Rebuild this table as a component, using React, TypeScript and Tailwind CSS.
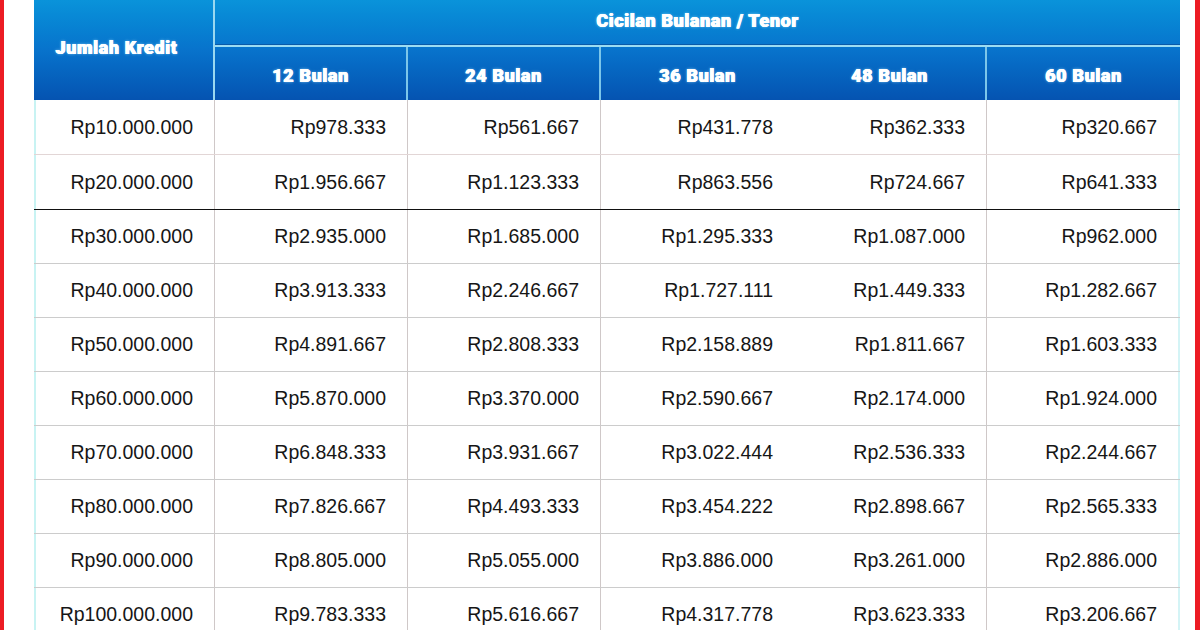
import React from "react";

const rows: string[][] = [
  ["Rp10.000.000", "Rp978.333", "Rp561.667", "Rp431.778", "Rp362.333", "Rp320.667"],
  ["Rp20.000.000", "Rp1.956.667", "Rp1.123.333", "Rp863.556", "Rp724.667", "Rp641.333"],
  ["Rp30.000.000", "Rp2.935.000", "Rp1.685.000", "Rp1.295.333", "Rp1.087.000", "Rp962.000"],
  ["Rp40.000.000", "Rp3.913.333", "Rp2.246.667", "Rp1.727.111", "Rp1.449.333", "Rp1.282.667"],
  ["Rp50.000.000", "Rp4.891.667", "Rp2.808.333", "Rp2.158.889", "Rp1.811.667", "Rp1.603.333"],
  ["Rp60.000.000", "Rp5.870.000", "Rp3.370.000", "Rp2.590.667", "Rp2.174.000", "Rp1.924.000"],
  ["Rp70.000.000", "Rp6.848.333", "Rp3.931.667", "Rp3.022.444", "Rp2.536.333", "Rp2.244.667"],
  ["Rp80.000.000", "Rp7.826.667", "Rp4.493.333", "Rp3.454.222", "Rp2.898.667", "Rp2.565.333"],
  ["Rp90.000.000", "Rp8.805.000", "Rp5.055.000", "Rp3.886.000", "Rp3.261.000", "Rp2.886.000"],
  ["Rp100.000.000", "Rp9.783.333", "Rp5.616.667", "Rp4.317.778", "Rp3.623.333", "Rp3.206.667"],
];

const cellBorders = [
  "border-l-2 border-l-[#c8f3f3] border-r border-r-[#cfc8c8]",
  "border-r border-r-[#cfc8c8]",
  "border-r border-r-[#cfc8c8]",
  "",
  "border-r border-r-[#cfc8c8]",
  "border-r-2 border-r-[#d4f4f6]",
];

export default function App() {
  return (
    <div className="flex h-[630px] w-[1200px] overflow-hidden bg-white">
      <div className="w-[4px] shrink-0 bg-[#ec1c24]" />
      <div className="w-[30px] shrink-0" />
      <div className="w-[1146px] shrink-0">
        <div
          className="grid grid-cols-[181px_193px_193px_193px_193px_193px] grid-rows-[47px_53px] bg-gradient-to-b from-[#0a93da] via-[#0873cc] to-[#0553b1] text-white font-black text-[18px] tracking-[0.6px]"
          style={{
            fontFamily: "Roboto, 'Open Sans', sans-serif",
            textShadow: "0.4px 0 0 #fff, -0.4px 0 0 #fff, 0 0 3px rgba(170,230,255,0.7)",
          }}
        >
          <div className="row-span-2 flex items-center justify-center border-r-2 border-r-[#9ad8f0] pb-[6px] pr-[14px]">
            Jumlah Kredit
          </div>
          <div className="col-span-5 flex items-center justify-center border-b-2 border-b-[#9cdcf2] shadow-[inset_0_-1px_0_#0a5aa8] pb-[4px]">
            Cicilan Bulanan / Tenor
          </div>
          <div className="flex items-center justify-center border-r-2 border-r-[#7cc6ea] pt-[3px]">12 Bulan</div>
          <div className="flex items-center justify-center border-r-2 border-r-[#7cc6ea] pt-[3px]">24 Bulan</div>
          <div className="flex items-center justify-center pt-[3px]">36 Bulan</div>
          <div className="flex items-center justify-center border-r-2 border-r-[#7cc6ea] pt-[3px]">48 Bulan</div>
          <div className="flex items-center justify-center pt-[3px]">60 Bulan</div>
        </div>
        <div style={{ fontFamily: "'Liberation Sans', Arial, sans-serif" }} className="text-[19.5px] text-[#161616]">
          {rows.map((r, i) => (
            <div
              key={i}
              className={`grid grid-cols-[181px_193px_193px_193px_193px_193px] ${
                i < 2 ? "h-[55px]" : "h-[54px]"
              } border-b ${i === 1 ? "border-b-[#111111]" : i === 0 ? "border-b-[#e2d6d6]" : "border-b-[#cccccc]"}`}
            >
              {r.map((v, j) => (
                <div key={j} className={`flex items-center justify-end pr-[21px] pt-[1px] ${cellBorders[j]}`}>
                  {v}
                </div>
              ))}
            </div>
          ))}
        </div>
      </div>
      <div className="w-[15px] shrink-0" />
      <div className="w-[5px] shrink-0 bg-[#ec1c24]" />
    </div>
  );
}
